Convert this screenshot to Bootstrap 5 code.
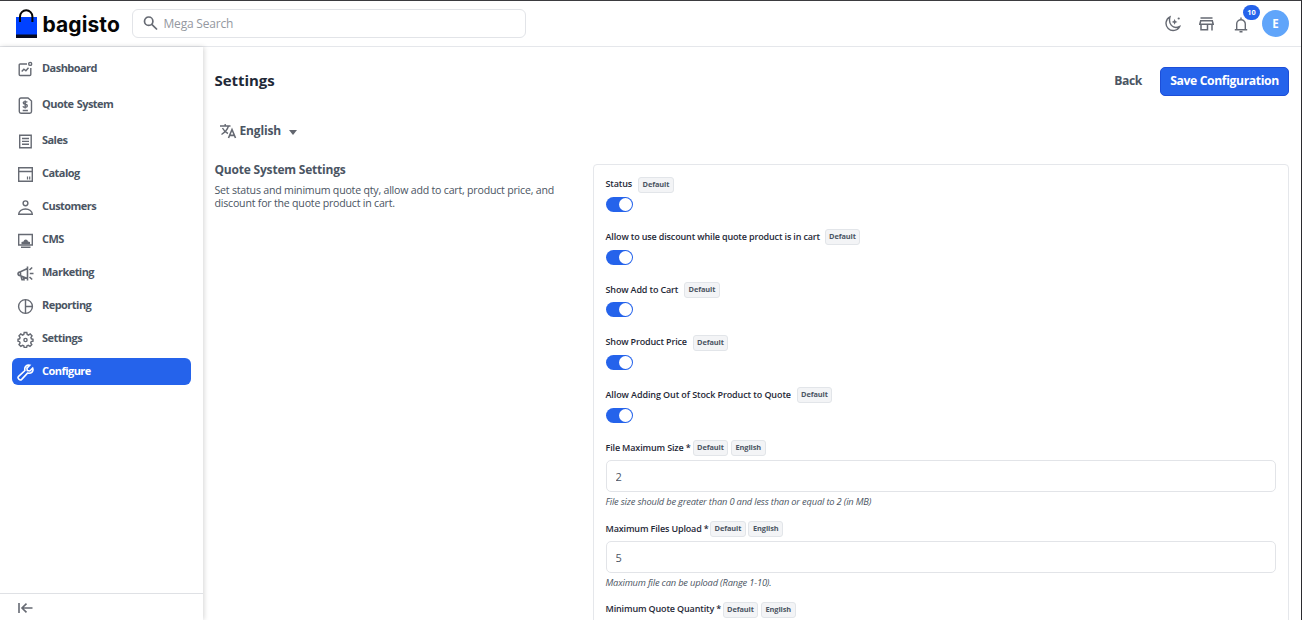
<!DOCTYPE html>
<html lang="en">
<head>
<meta charset="utf-8">
<title>Settings - Bagisto</title>
<link href="https://cdn.jsdelivr.net/npm/bootstrap@5.3.0/dist/css/bootstrap.min.css" rel="stylesheet">
<style>
body{font-family:"Open Sans","Noto Sans",sans-serif;color:#4b5563;background:#fff;overflow:hidden;font-size:11px}
.shell{height:620px;border-top:1px solid #3b3b3f;border-right:1px solid #2b2b2f}
.workarea{min-height:0}
.topbar{height:46px;border-bottom:1px solid #e5e7eb;padding:0 12px 0 15px}
.brandname{font:700 21px/30px Inter,sans-serif;color:#060606;letter-spacing:.1px;margin-left:5.5px;position:relative;top:1px;width:77px}
.searchbox{width:394px;height:29px;border:1px solid #e2e4e8;border-radius:6px;margin-left:12.5px;padding-left:10px;font-size:12px;letter-spacing:-.2px;color:#9498a0}
.searchbox svg{margin-right:5.5px}
svg.ic{fill:none;stroke:#666a73;stroke-width:1.4;display:block;flex:none}
.avatar{width:27px;height:27px;background:#60a5fa;font-size:11.5px;font-weight:700;color:#fff}
.notif{top:-12px;left:9px;background:#2563eb;font-size:7.4px;line-height:15px;width:17px;height:15px;padding:0}
.side{width:203px;box-shadow:1px 0 5px rgba(0,0,0,.17);padding-top:8px}
.side .nav{padding:0 12px;gap:6px}
.side .nav-link{height:27px;padding:0 0 0 5px;font-size:11px;font-weight:700;letter-spacing:-.54px;word-spacing:1px;color:#4b5563;border-radius:6px}
.side .nav-link .ic{margin-right:8px;position:relative;top:1px}
.side .nav-link.tall{margin-bottom:3px}
.side .nav-link.active{background:#2563eb;color:#fff}
.side .nav-link.active .ic{stroke:#fff}
.collapser{height:27px;border-top:1px solid #dfe1e5;padding:2px 0 0 18px}
.content{padding:20px 12px 0 11.500px;min-width:0}
.content h1{font-size:15px;font-weight:700;color:#1f2937;letter-spacing:-.05px;padding-bottom:3px}
.backlink{font-size:12.2px;font-weight:700;letter-spacing:-.4px;color:#4b5563;margin-right:18px}
.savebtn{height:29px;width:129px;padding:0;background:#2563eb;border:1px solid #1d4ed8;border-radius:5px;font-size:12.2px;font-weight:700;letter-spacing:-.38px;color:#fff}
.langpick{height:20px;margin:25px 0 0 5px;font-size:12px;font-weight:700;letter-spacing:-.15px}
.caret{border:4px solid transparent;border-top:5px solid #62666f;border-bottom:0;margin:2px 0 0 8px}
.cfg{margin-top:23px}
.about{width:378px}
.about h2{font-size:12px;font-weight:700;letter-spacing:-.2px;line-height:14px;margin:-1px 0 7px}
.about p{font-size:10.6px;letter-spacing:-.21px;line-height:13px;width:350px}
.panel{border:1px solid #e5e7eb;border-radius:4px;padding:11.6px 12px;height:480px}
.lbl{height:16px;font-size:9px;font-weight:600;letter-spacing:-.145px;color:#1f2937;margin-bottom:4.4px;white-space:nowrap}
.lbl>span:first-child{margin-top:-1px}
.tag{height:16px;border:1px solid #e2e5e9;background:#f3f4f6;border-radius:3px;font-size:7.4px;font-weight:700;letter-spacing:-.1px;color:#4b5563;padding:0 3.6px;line-height:13.5px}
.tag+.tag{margin-left:2.5px}
.toggle{width:27px;height:15px;min-height:0;display:block;background:#2563eb;border-radius:8px;padding:1px;margin-bottom:17.3px}
.toggle::after{content:"";display:block;width:13px;height:13px;border-radius:50%;background:#fff;margin-left:12px}
.field{height:32px;min-height:0;border:1px solid #e2e4e8;border-radius:5px;padding:0 9px;font-size:11px;color:#4b5563}
.hint{font-size:9.300px;font-style:italic;letter-spacing:-.18px;line-height:13px;margin:2.5px 0 12.9px;color:#4b5563}
</style>
</head>
<body>
<div class="shell d-flex flex-column">
<header class="topbar d-flex align-items-center flex-shrink-0">
  <svg width="22" height="29" viewBox="0 0 22 29" style="flex:none"><path fill="#0041ff" d="M1 8h21v18H1z"/><path d="M1 25.5h21V29H1z" fill="#060a20"/><path d="M5 13V7.5a6.2 6.2 0 0 1 12.4 0V13" fill="none" stroke="#060606" stroke-width="2"/></svg>
  <span class="brandname">bagisto</span>
  <div class="searchbox d-flex align-items-center"><svg class="ic" width="15" height="15" viewBox="0 0 15 15" style="stroke-width:1.7"><circle cx="5.7" cy="5.2" r="4.2"/><path d="m8.8 8.3 5.2 5.2"/></svg><span>Mega Search</span></div>
  <div class="d-flex align-items-center ms-auto">
    <svg class="ic" width="17" height="17" viewBox="0 0 17 17"><path d="M6 1.900a7.200 7.200 0 1 0 9.700 9.600Q10.500 13.800 7.400 10.400 4.500 7 6 1.900z"/><path d="m10.600 4 .9 2 2 .9-2 .9-.9 2-.9-2-2-.9 2-.9z" fill="#666a73" stroke="none"/><circle cx="14.700" cy="3.500" r="1.100" fill="#666a73" stroke="none"/></svg>
    <svg class="ic" style="margin-left:18.500px" width="15" height="14" viewBox="0 0 15 14"><path d="M1.500 1h12M1.700 3.700h11.600l.9 3.500H.8zM2 7v5.800h6.500V7M13 7v6.500" stroke-width="1.500"/></svg>
    <div class="position-relative" style="margin-left:20px;top:1px"><svg class="ic" width="14" height="16" viewBox="0 0 14 16"><path d="M.8 12.800h12.400M2.700 12.500V7a4.300 4.300 0 0 1 8.600 0v5.500M7 .6v2M5.500 14.800h3"/></svg><span class="badge rounded-pill position-absolute notif">10</span></div>
    <div class="avatar rounded-circle d-flex align-items-center justify-content-center" style="margin-left:14px">E</div>
  </div>
</header>
<div class="workarea d-flex flex-grow-1">
  <aside class="side d-flex flex-column flex-shrink-0">
    <nav class="nav flex-column flex-nowrap">
      <a class="nav-link tall d-flex align-items-center"><svg class="ic" width="17" height="17" viewBox="0 0 17 17"><path d="M10 3H3.200q-1 0-1 1v9.500q0 1 1 1h9.600q1 0 1-1V7"/><path d="m4.700 10.500 2.200-2.300 2 1.500 2.600-3"/><circle cx="13.200" cy="2.900" r="1.500"/></svg>Dashboard</a>
      <a class="nav-link tall d-flex align-items-center"><svg class="ic" width="17" height="17" viewBox="0 0 17 17"><path d="M4 1h7l3.500 3v10.500q0 1.700-1.700 1.700H4q-1.700 0-1.700-1.700V2.700Q2.300 1 4 1zM5.700 13.500h5.200M10.400 5.300Q9.500 4.500 8 4.600C5.700 4.700 5.600 6.800 8.200 7.300c3 .5 2.700 3-.1 3Q6.500 10.300 5.800 9.400M8.200 3.500v8"/></svg>Quote System</a>
      <a class="nav-link d-flex align-items-center"><svg class="ic" width="17" height="17" viewBox="0 0 17 17"><path d="M2.700 2.200h11.500v12.600H2.700zM5 5.500h7M5 8.400h7M5 11.300h7"/></svg>Sales</a>
      <a class="nav-link d-flex align-items-center"><svg class="ic" width="17" height="17" viewBox="0 0 17 17"><path d="M1.700 1.700h13.600v13.600H1.700zM1.700 5.500h13.600"/><path d="M10.500 10.500v3M12.700 10.500v3" stroke-width="1.200"/></svg>Catalog</a>
      <a class="nav-link d-flex align-items-center"><svg class="ic" width="17" height="17" viewBox="0 0 17 17"><circle cx="8.500" cy="4.300" r="2.400"/><path d="M1.700 15.200c0-2.800 3-5.200 6.800-5.200s6.800 2.400 6.800 5.200z"/></svg>Customers</a>
      <a class="nav-link d-flex align-items-center"><svg class="ic" width="17" height="17" viewBox="0 0 17 17"><path d="M1.700 2.500h13.600v10.500H1.700zM4 15.300h9.500"/><path d="M4.500 12.300V10l2-.6Q7 7.500 8.800 7.500T11 9.400l2 .6v2.300z" fill="#666a73" stroke="none"/></svg>CMS</a>
      <a class="nav-link d-flex align-items-center"><svg class="ic" width="17" height="17" viewBox="0 0 17 17"><path d="M10.500 1.500v14M10.500 3.500 3.500 6.700Q1 7 1 8.700t2.500 2l7 2.700M3.500 6.700v4M4 11l1 3.800h2l-.7-3M12.800 8.500h3.700M12.500 5l2.700-2.500M12.500 12l2.700 2.500" stroke-width="1.600"/></svg>Marketing</a>
      <a class="nav-link d-flex align-items-center"><svg class="ic" width="17" height="17" viewBox="0 0 17 17"><circle cx="8.500" cy="8.500" r="6.900"/><path d="M8.500 1.600v13.800M8.500 8.500h6.900"/></svg>Reporting</a>
      <a class="nav-link d-flex align-items-center"><svg class="ic" width="17" height="17" viewBox="0 0 17 17"><path d="M7.200 1.500h2.600l.4 2 1.300.6 1.700-1.100 1.800 1.800-1.100 1.700.5 1.300 1.600.4v2l-1.800.5-.5 1.200 1.100 1.700-1.800 1.800-1.700-1.100-1.300.5-.4 1.700H7.200l-.4-1.700-1.300-.5-1.700 1.100L2 13.600l1.100-1.700-.5-1.200-1.600-.5v-2l1.600-.4.5-1.300L2 4.800 3.800 3l1.700 1.100 1.300-.6z"/><circle cx="8.500" cy="9" r="1.600"/></svg>Settings</a>
      <a class="nav-link active d-flex align-items-center"><svg class="ic" width="17" height="17" viewBox="0 0 17 17" style="stroke-width:1.600"><path d="M15.700 4.200 12.800 7l-2.500-.4-.4-2.500 2.900-2.900C10 .4 7 2.500 7.900 6.500L1.600 12.300c-1.700 1.800 1.300 4.800 3.100 3.100l5.800-6.300c4 .9 6.300-2 5.200-4.900z"/></svg>Configure</a>
    </nav>
    <div class="collapser d-flex align-items-center mt-auto"><svg class="ic" width="15" height="12" viewBox="0 0 15 12" style="stroke-width:1.600"><path d="M1 1v10M14.500 6H4M8.500 1.600 4 6l4.500 4.400"/></svg></div>
  </aside>
  <main class="content flex-grow-1">
    <div class="d-flex align-items-center" style="height:29px"><h1 class="mb-0 me-auto">Settings</h1><a class="backlink text-decoration-none">Back</a><button class="btn savebtn">Save Configuration</button></div>
    <div class="langpick d-flex align-items-center"><svg class="ic" width="17" height="16" viewBox="0 0 17 16" style="margin-right:3px"><path d="M0 3h10.500M5.200 1v2M8.500 3Q7 8 1.500 11.500M2.500 5Q4.500 9 8 10.500"/><path d="m8.500 15 3.500-8.500 3.500 8.500M9.700 12.400h4.600" stroke-width="1.600"/></svg>English<span class="caret"></span></div>
    <div class="cfg d-flex">
      <section class="about flex-shrink-0"><h2>Quote System Settings</h2><p>Set status and minimum quote qty, allow add to cart, product price, and<br>discount for the quote product in cart.</p></section>
      <section class="panel flex-grow-1">
        <div class="lbl d-flex align-items-center"><span style="width:32.5px">Status</span><span class="tag">Default</span></div><div class="toggle"></div>
        <div class="lbl d-flex align-items-center"><span style="width:219px">Allow to use discount while quote product is in cart</span><span class="tag">Default</span></div><div class="toggle"></div>
        <div class="lbl d-flex align-items-center"><span style="width:78.500px">Show Add to Cart</span><span class="tag">Default</span></div><div class="toggle"></div>
        <div class="lbl d-flex align-items-center"><span style="width:87px">Show Product Price</span><span class="tag">Default</span></div><div class="toggle"></div>
        <div class="lbl d-flex align-items-center"><span style="width:191px;letter-spacing:-.1px">Allow Adding Out of Stock Product to Quote</span><span class="tag">Default</span></div><div class="toggle"></div>
        <div class="lbl d-flex align-items-center"><span style="width:87px">File Maximum Size *</span><span class="tag">Default</span><span class="tag">English</span></div>
        <input class="form-control field" value="2"><div class="hint">File size should be greater than 0 and less than or equal to 2 (in MB)</div>
        <div class="lbl d-flex align-items-center"><span style="width:104.500px">Maximum Files Upload *</span><span class="tag">Default</span><span class="tag">English</span></div>
        <input class="form-control field" value="5"><div class="hint">Maximum file can be upload (Range 1-10).</div>
        <div class="lbl d-flex align-items-center"><span style="width:117px">Minimum Quote Quantity *</span><span class="tag">Default</span><span class="tag">English</span></div>
      </section>
    </div>
  </main>
</div>
</div>
<script src="https://cdn.jsdelivr.net/npm/bootstrap@5.3.0/dist/js/bootstrap.bundle.min.js"></script>
</body>
</html>
